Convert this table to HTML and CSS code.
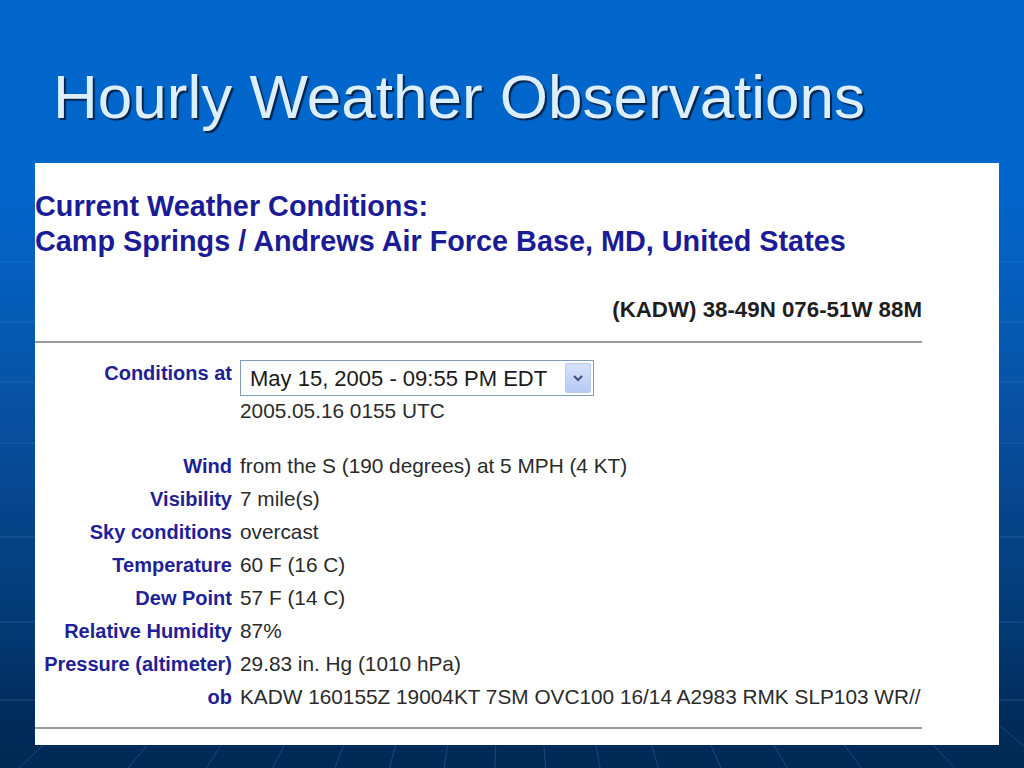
FILE: index.html
```html
<!DOCTYPE html>
<html lang="en">
<head>
<meta charset="utf-8">
<title>Hourly Weather Observations</title>
<link rel="stylesheet" href="styles.css">
</head>
<body>
<svg class="bg-grid" width="1024" height="768" viewBox="0 0 1024 768" aria-hidden="true">
  <g stroke="#4f95e0" stroke-width="1" opacity="0.28">
    <line x1="0" y1="262" x2="1024" y2="262"/>
    <line x1="0" y1="322" x2="1024" y2="322"/>
    <line x1="0" y1="382" x2="1024" y2="382"/>
    <line x1="0" y1="443" x2="1024" y2="443"/>
    <line x1="0" y1="537" x2="1024" y2="537"/>
    <line x1="0" y1="622" x2="1024" y2="622"/>
    <line x1="0" y1="700" x2="1024" y2="700"/>
  </g>
  <g stroke="#3f86d6" stroke-width="1" opacity="0.35">
    <line x1="512" y1="300" x2="-120" y2="900"/>
    <line x1="512" y1="300" x2="20" y2="900"/>
    <line x1="512" y1="300" x2="120" y2="900"/>
    <line x1="512" y1="300" x2="205" y2="900"/>
    <line x1="512" y1="300" x2="285" y2="900"/>
    <line x1="512" y1="300" x2="355" y2="900"/>
    <line x1="512" y1="300" x2="425" y2="900"/>
    <line x1="512" y1="300" x2="490" y2="900"/>
    <line x1="512" y1="300" x2="555" y2="900"/>
    <line x1="512" y1="300" x2="625" y2="900"/>
    <line x1="512" y1="300" x2="700" y2="900"/>
    <line x1="512" y1="300" x2="780" y2="900"/>
    <line x1="512" y1="300" x2="865" y2="900"/>
    <line x1="512" y1="300" x2="960" y2="900"/>
    <line x1="512" y1="300" x2="1080" y2="900"/>
    <line x1="512" y1="300" x2="1200" y2="900"/>
  </g>
</svg>

<h1 class="title">Hourly Weather Observations</h1>

<div class="panel">
  <h2 class="heading">Current Weather Conditions:<br>Camp Springs / Andrews Air Force Base, MD, United States</h2>
  <div class="station">(KADW) 38-49N 076-51W 88M</div>
  <div class="rule"></div>

  <div class="obs">
    <div class="label cond-label">Conditions at</div>
    <div class="value cond-value">
      <div class="select">
        <span class="select-text">May 15, 2005 - 09:55 PM EDT</span>
        <span class="select-btn">
          <svg width="12" height="10" viewBox="0 0 12 10"><path d="M2 3 L6 7 L10 3" fill="none" stroke="#3d4f7a" stroke-width="2"/></svg>
        </span>
      </div>
      <div class="utc">2005.05.16 0155 UTC</div>
    </div>

    <div class="label gap">Wind</div>
    <div class="value gap">from the S (190 degrees) at 5 MPH (4 KT)</div>

    <div class="label">Visibility</div>
    <div class="value">7 mile(s)</div>

    <div class="label">Sky conditions</div>
    <div class="value">overcast</div>

    <div class="label">Temperature</div>
    <div class="value">60 F (16 C)</div>

    <div class="label">Dew Point</div>
    <div class="value">57 F (14 C)</div>

    <div class="label">Relative Humidity</div>
    <div class="value">87%</div>

    <div class="label">Pressure (altimeter)</div>
    <div class="value">29.83 in. Hg (1010 hPa)</div>

    <div class="label">ob</div>
    <div class="value">KADW 160155Z 19004KT 7SM OVC100 16/14 A2983 RMK SLP103 WR//</div>
  </div>

  <div class="rule rule-bottom"></div>
</div>
</body>
</html>
```

FILE: styles.css
```css
html, body {
  margin: 0;
  padding: 0;
}

body {
  width: 1024px;
  height: 768px;
  overflow: hidden;
  position: relative;
  font-family: "Liberation Sans", Arial, sans-serif;
  background: linear-gradient(to bottom,
    #0066cc 0px,
    #0066cc 170px,
    #0460c0 260px,
    #0754a8 380px,
    #06468e 500px,
    #033a75 620px,
    #012c5a 720px,
    #002a55 768px);
}

.bg-grid {
  position: absolute;
  left: 0;
  top: 0;
  z-index: 0;
}

.title {
  position: relative;
  z-index: 1;
  margin: 66px 0 35px 53px;
  font-size: 62px;
  line-height: 62px;
  font-weight: normal;
  color: #dcefff;
  text-shadow: 2px 2px 1px #082448;
  white-space: nowrap;
}

.panel {
  position: relative;
  z-index: 1;
  box-sizing: border-box;
  margin-left: 35px;
  width: 964px;
  height: 582px;
  padding: 26px 77px 0 0;
  background: #ffffff;
}

.heading {
  margin: 0;
  font-size: 28.8px;
  line-height: 35px;
  font-weight: bold;
  color: #1b1b95;
  white-space: nowrap;
}

.station {
  margin-top: 36px;
  text-align: right;
  font-size: 22.3px;
  line-height: 30px;
  font-weight: bold;
  color: #1e1e1e;
}

.rule {
  height: 2px;
  margin-top: 16px;
  background: #9c9c9c;
}

.rule-bottom {
  margin-top: 14px;
}

.obs {
  display: grid;
  grid-template-columns: 197px 1fr;
  column-gap: 8px;
  align-items: start;
  margin-top: 17px;
}

.label {
  text-align: right;
  font-size: 20px;
  height: 33px;
  line-height: 34px;
  font-weight: bold;
  color: #1f1f96;
  white-space: nowrap;
}

.value {
  font-size: 20.8px;
  height: 33px;
  line-height: 33px;
  color: #2a2a2a;
  white-space: nowrap;
}

.cond-label {
  height: auto;
  line-height: 26px;
}

.cond-value {
  height: auto;
  line-height: 26px;
}

.gap {
  margin-top: 25px;
}

.select {
  box-sizing: border-box;
  width: 354px;
  height: 36px;
  border: 1px solid #7f9db9;
  display: flex;
  align-items: center;
  justify-content: space-between;
  padding: 0 2px 0 9px;
}

.select-text {
  font-size: 22px;
  line-height: 34px;
  padding-top: 1px;
  color: #1a1a1a;
}

.select-btn {
  box-sizing: border-box;
  width: 26px;
  height: 30px;
  display: flex;
  align-items: center;
  justify-content: center;
  border: 1px solid #b9cbec;
  border-radius: 2px;
  background: linear-gradient(to bottom, #d6e2fb, #b5c9f2);
}

.utc {
  margin-top: 2px;
  font-size: 20.8px;
  line-height: 26px;
}
```
